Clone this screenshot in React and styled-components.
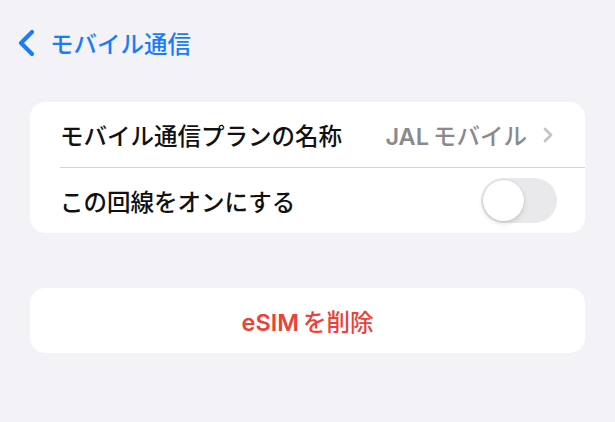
import React from "react";
import styled, { createGlobalStyle } from "styled-components";

const Global = createGlobalStyle`
  html, body { margin: 0; padding: 0; background: #f2f2f7; }
  body {
    font-family: Inter, "Noto Sans CJK JP", "Noto Sans", sans-serif;
    -webkit-font-smoothing: antialiased;
  }
`;

const Page = styled.div`
  width: 615px;
  height: 422px;
  background: #f2f2f7;
  display: flex;
  flex-direction: column;
  box-sizing: border-box;
  padding-top: 20px;
`;

const Nav = styled.div`
  height: 46px;
  display: flex;
  align-items: center;
  gap: 14px;
  padding-left: 17px;
  color: #1a7cf6;
  font-size: 23.5px;
  font-weight: 500;
`;

const Card = styled.div`
  margin: ${(p) => p.$top}px 30px 0;
  background: #ffffff;
  border-radius: 15px;
  overflow: hidden;
`;

const Row = styled.div`
  height: ${(p) => p.$h}px;
  display: flex;
  align-items: center;
  justify-content: ${(p) => (p.$center ? "center" : "space-between")};
  padding: 0 ${(p) => p.$pr}px 0 30px;
  position: relative;
  font-size: 23.5px;
  font-weight: 500;
  color: ${(p) => p.$color || "#111111"};
  ${(p) =>
    p.$sep &&
    `&::after {
      content: "";
      position: absolute;
      left: 30px;
      right: 0;
      bottom: 0;
      height: 1px;
      background: #d4d4d8;
    }`}
`;

const Label = styled.span``;

const Latin = styled.span`
  margin-right: 4px;
  font-weight: 600;
`;

const Value = styled.span`
  display: flex;
  align-items: center;
  gap: 16px;
  color: #8a8a8e;
`;

const Toggle = styled.div`
  width: 76px;
  height: 45px;
  border-radius: 23px;
  background: #e9e9eb;
  padding: 2px;
  box-sizing: border-box;
  display: flex;
  align-items: center;
`;

const Knob = styled.div`
  width: 41px;
  height: 41px;
  border-radius: 50%;
  background: #ffffff;
  box-shadow: 0 2px 5px rgba(0, 0, 0, 0.15), 0 0 0 0.5px rgba(0, 0, 0, 0.06);
`;

export default function App() {
  return (
    <Page>
      <Global />
      <Nav>
        <svg width="19" height="28" viewBox="0 0 19 28">
          <path
            d="M15 3 L4 14 L15 25"
            fill="none"
            stroke="#1a7cf6"
            strokeWidth="4.2"
            strokeLinecap="round"
            strokeLinejoin="round"
          />
        </svg>
        <span>モバイル通信</span>
      </Nav>
      <Card $top={36}>
        <Row $h={66} $pr={32} $sep>
          <Label>モバイル通信プランの名称</Label>
          <Value>
            <span>
              <Latin>JAL</Latin>モバイル
            </span>
            <svg width="10" height="16" viewBox="0 0 10 16">
              <path
                d="M2 2 L8 8 L2 14"
                fill="none"
                stroke="#c4c4c7"
                strokeWidth="2.8"
                strokeLinecap="round"
                strokeLinejoin="round"
              />
            </svg>
          </Value>
        </Row>
        <Row $h={65} $pr={28}>
          <Label>この回線をオンにする</Label>
          <Toggle>
            <Knob />
          </Toggle>
        </Row>
      </Card>
      <Card $top={55}>
        <Row $h={65} $pr={30} $center $color="#eb4136">
          <span>
            <Latin>eSIM</Latin>を削除
          </span>
        </Row>
      </Card>
    </Page>
  );
}
